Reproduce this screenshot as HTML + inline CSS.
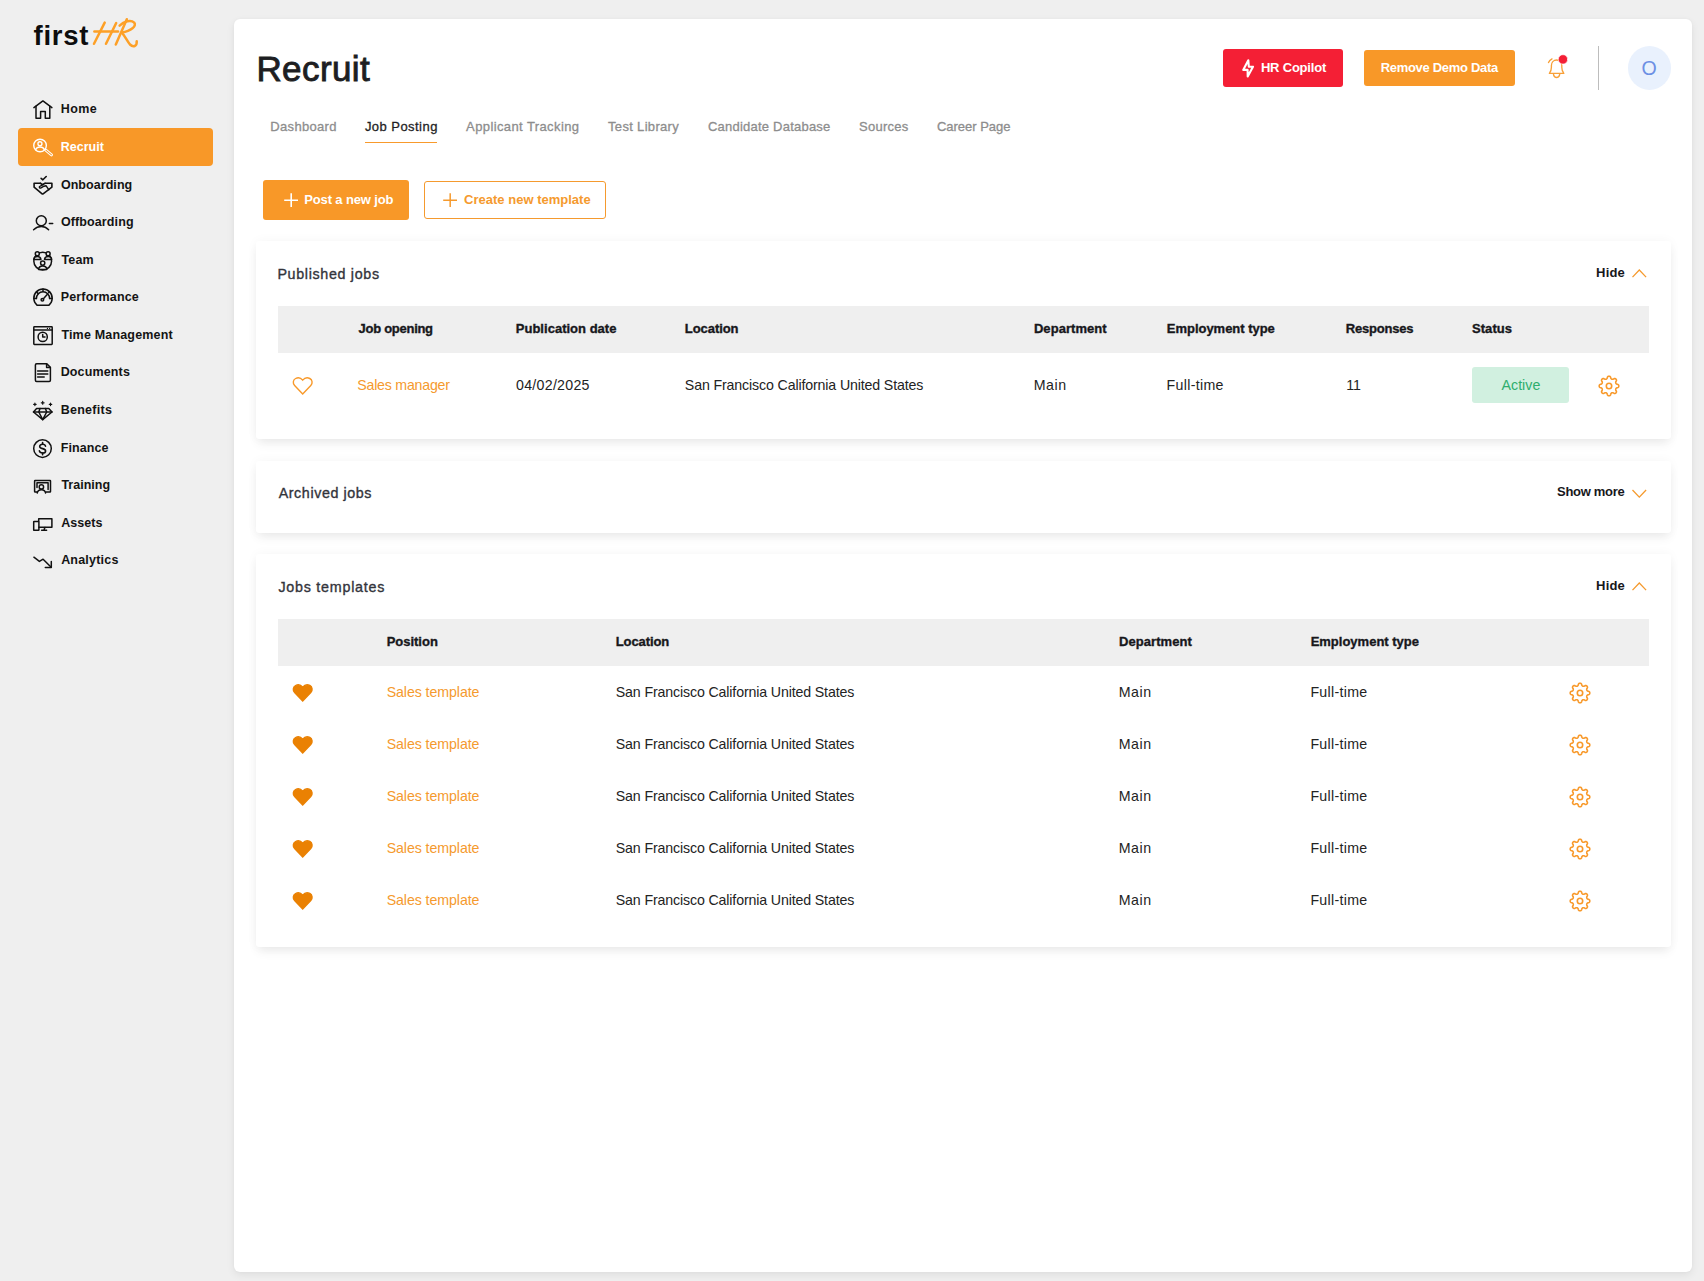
<!DOCTYPE html>
<html lang="en">
<head>
<meta charset="utf-8">
<title>Recruit - Job Posting</title>
<style>
*{box-sizing:border-box;margin:0;padding:0}
html,body{width:1704px;height:1281px;overflow:hidden}
body{background:#efefef;font-family:"Liberation Sans",sans-serif;color:#1b1b1f;position:relative;font-size:13px}
.abs{position:absolute}
.t{position:absolute;white-space:nowrap;line-height:20px}
.ic{fill:none;stroke-width:1.5;stroke-linecap:round;stroke-linejoin:round;overflow:visible}
#main{position:absolute;left:234px;top:19px;width:1458px;height:1253px;background:#fff;border-radius:6px;box-shadow:0 3px 8px rgba(0,0,0,.07),0 0 3px rgba(0,0,0,.03)}
.card{position:absolute;left:256px;width:1415px;background:#fff;border-radius:3px;box-shadow:0 6px 11px -2px rgba(0,0,0,.075),0 0 12px rgba(0,0,0,.04)}
.thead{position:absolute;left:278px;width:1371px;height:47px;background:#efefef}
</style>
</head>
<body>
<!-- LOGO -->
<svg class="abs" style="left:0;top:0" width="160" height="60" viewBox="0 0 160 60" fill="none" stroke="#fda027" stroke-width="2.5" stroke-linecap="round" stroke-linejoin="round"><path d="M104.7 22.6 L94 43.8"/><path d="M116.2 23 L106 43.8"/><path d="M94.4 31.6 H118"/><path d="M126.8 19.2 L115.8 44.5"/><path d="M119.6 25.6 C124 21.2 131 19.6 134.2 22.6 C137 26 131 31 121.8 32.6 C125 36 127 41 130 44.5 C133 47.5 137.2 46.5 136.7 41.2"/></svg>
<!-- SIDEBAR -->
<div class="abs" style="left:18px;top:128px;width:195px;height:38px;border-radius:4px;background:#f89828"></div>
<svg class="abs ic" style="left:33px;top:100.3px" width="20" height="20" viewBox="0 0 20 20" stroke="#111"><path d="M0.9 7.6 L9.9 0.9 L18.9 7.6"/><path d="M3 6.3 V18.3 H7.6 V11.6 H12.3 V18.3 H16.8 V6.3"/></svg>
<svg class="abs ic" style="left:33px;top:138.6px" width="20" height="20" viewBox="0 0 20 20" stroke="#fff"><g stroke-width="1.4"><circle cx="7.05" cy="6.5" r="6.3"/><circle cx="6.95" cy="4.8" r="2"/><path d="M2.6 10.6 C3.4 8.8 4.9 8 6.95 8 S10.6 8.8 11.4 10.6"/><rect x="0.1" y="-0.95" width="9.3" height="1.9" rx="0.95" stroke-width="1.05" transform="translate(12 10.5) rotate(39.5)"/></g></svg>
<svg class="abs ic" style="left:33px;top:176px" width="20" height="20" viewBox="0 0 20 20" stroke="#111"><g stroke-width="1.6"><path d="M8.1 2.3 L9.9 3.8 L13.2 0.5"/><path d="M7.4 7.25 H1.1 V11.2 L9.1 17.8 Q9.6 18.2 10.1 17.8 L18.9 11.2 V7.25 H12.2"/><path d="M7.4 7.25 L9.5 8.6 L12.2 7.25"/><path d="M10.4 8.3 L6.6 10.5 C5.8 11.3 6.8 12.6 8 11.9 L11 10.2 L13 9.7 L15.9 13.8" stroke-width="1.4"/></g></svg>
<svg class="abs ic" style="left:33px;top:214.7px" width="20" height="20" viewBox="0 0 20 20" stroke="#111"><circle cx="8.3" cy="5.7" r="5"/><path d="M0.6 14.7 C3 12.4 5.5 11.5 8.3 11.5 S13.4 12.4 15.6 14.7"/><path d="M16.4 8.6 H19.7"/></svg>
<svg class="abs ic" style="left:33px;top:251.1px" width="20" height="20" viewBox="0 0 20 20" stroke="#111"><circle cx="9.7" cy="10.1" r="8.9"/><g fill="#efefef"><path d="M0.7 8.6 C0.9 6.6 2.4 5.6 4.3 5.6 S7.7 6.6 7.9 8.6 Z"/><path d="M11.5 8.6 C11.7 6.6 13.2 5.6 15.1 5.6 S18.5 6.6 18.7 8.6 Z"/><circle cx="4.3" cy="2.8" r="2"/><circle cx="15.1" cy="2.8" r="2"/><path d="M5.6 18.4 C5.8 16 7.5 14.9 9.7 14.9 S13.6 16 13.8 18.4 Z"/><circle cx="9.7" cy="12.1" r="2.1"/></g></svg>
<svg class="abs ic" style="left:33px;top:288px" width="20" height="20" viewBox="0 0 20 20" stroke="#111"><path d="M4.2 17.3 A9.2 9.2 0 1 1 15.8 17.3 Z"/><path d="M3.4 10.4 A6.6 6.6 0 0 1 16.6 10.4"/><path d="M10 1 V3.6 M3.6 4 L5.2 5.6 M16.4 4 L15.6 4.8 M0.9 10.4 H3.4 M16.6 10.4 H19.1"/><circle cx="9.4" cy="11.7" r="1.3"/><path d="M10.4 10.8 L14.2 6.6"/></svg>
<svg class="abs ic" style="left:33px;top:326.4px" width="20" height="20" viewBox="0 0 20 20" stroke="#111"><rect x="0.8" y="0.8" width="18.4" height="17.6" rx="0.6"/><path d="M0.8 4.1 H19.2"/><path d="M14.4 2.4 H14.5 M16.6 2.4 H16.7" stroke-width="1.2"/><circle cx="9.7" cy="10.9" r="4.6"/><path d="M9.7 8.4 V11 H12"/></svg>
<svg class="abs ic" style="left:33px;top:363px" width="20" height="20" viewBox="0 0 20 20" stroke="#111"><path d="M3.6 0.8 H13.8 L17.4 4.4 V17.2 C17.4 18 17 18.4 16.2 18.4 H3.6 C2.8 18.4 2.4 18 2.4 17.2 V2 C2.4 1.2 2.8 0.8 3.6 0.8 Z"/><path d="M13.6 1 V4.6 H17.2"/><path d="M4.6 8.1 H14.8 M4.6 11 H14.8 M4.6 13.9 H11.2"/></svg>
<svg class="abs ic" style="left:33px;top:401.1px" width="20" height="20" viewBox="0 0 20 20" stroke="#111"><path d="M3.6 7.4 H15.8 L19 11 L9.7 18.6 L0.5 11 Z"/><path d="M0.5 11 H19"/><path d="M7 7.4 L5.8 11 L9.7 18.6 L13.7 11 L12.4 7.4"/><path d="M1.9 2.2 V4.6 M0.7 3.4 H3.1 M9.7 0.4 V3.2 M8.3 1.8 H11.1 M17.5 2.2 V4.6 M16.3 3.4 H18.7" stroke-width="1.2"/></svg>
<svg class="abs ic" style="left:33px;top:439px" width="20" height="20" viewBox="0 0 20 20" stroke="#111"><circle cx="9.5" cy="9.6" r="8.8"/><path d="M12.5 7.2 C12.2 5.8 11 5.3 9.6 5.3 C7.9 5.3 6.7 6.1 6.7 7.4 C6.7 8.8 7.9 9.2 9.6 9.6 C11.3 10 12.6 10.5 12.6 11.9 C12.6 13.2 11.3 14 9.6 14 C8 14 6.7 13.4 6.4 11.9" stroke-width="1.6"/><path d="M9.6 3.6 V5.2 M9.6 14 V15.7" stroke-width="1.6"/></svg>
<svg class="abs ic" style="left:33px;top:478.6px" width="20" height="20" viewBox="0 0 20 20" stroke="#111"><path d="M4.4 13 H2.1 C1.8 13 1.6 12.8 1.6 12.5 V1.9 C1.6 1.6 1.8 1.4 2.1 1.4 H17 C17.3 1.4 17.5 1.6 17.5 1.9 V12.5 C17.5 12.8 17.3 13 17 13 H13.2"/><path d="M4 8.4 V3.8 H15.1 V10.6"/><circle cx="8.4" cy="7.9" r="2.2"/><path d="M4.2 14 C4.6 11.7 6.2 10.7 8.4 10.7 S12.2 11.7 12.6 14"/></svg>
<svg class="abs ic" style="left:33px;top:517.9px" width="20" height="20" viewBox="0 0 20 20" stroke="#111"><path d="M5.7 3 V0.7 H18.9 V9.3 H5.9"/><path d="M11.9 9.5 L10.9 12.2 M8.6 12.3 H13.6"/><rect x="0.7" y="3.4" width="5.2" height="8.9" rx="0.4"/></svg>
<svg class="abs ic" style="left:33px;top:555.6px" width="20" height="20" viewBox="0 0 20 20" stroke="#111"><path d="M0.9 1.2 L6.4 5.4 L10.1 3.2 L18.2 11.2"/><path d="M18.3 5.4 V11.4 H12.3"/></svg>
<!-- MAIN PANEL -->
<div id="main"></div>
<!-- HEADER RIGHT -->
<div class="abs" style="left:1223px;top:49px;width:120px;height:38px;background:#f41f35;border-radius:3px"></div>
<svg class="abs" style="left:1235px;top:52px" width="30" height="32" viewBox="0 0 30 32" fill="none" stroke="#fff" stroke-width="2.1" stroke-linejoin="round"><path d="M13.3 8.2 L8.2 17.9 H12.6 L12.7 24.4 L18 14.7 H13.8 Z"/></svg>
<div class="abs" style="left:1364px;top:50px;width:151px;height:36px;background:#f89828;border-radius:3px"></div>
<svg class="abs" style="left:1535px;top:40px" width="40" height="44" viewBox="0 0 40 44" fill="none" stroke="#f8a038" stroke-width="1.35" stroke-linecap="round" stroke-linejoin="round"><path d="M14.4 33.4 C15.8 31.6 16.4 29.6 16.4 27.2 V25.6 C16.4 22.4 18.6 20 21.6 20 C24.6 20 26.8 22.4 26.8 25.6 V27.2 C26.8 29.6 27.4 31.6 28.8 33.4 Z"/><path d="M18.5 34.3 C18.9 36.5 20 37.5 21.6 37.5 S24.3 36.5 24.7 34.3"/><path d="M13.5 22.6 C14.1 21 15.3 19.7 17 18.9"/><circle cx="28" cy="19.4" r="4.7" fill="#f41f35" stroke="#fff" stroke-width="0.6"/></svg>
<div class="abs" style="left:1598px;top:46px;width:1px;height:44px;background:#bdbdbd"></div>
<div class="abs" style="left:1628px;top:46px;width:43px;height:43.6px;border-radius:50%;background:#e9f1fd"></div>
<!-- TABS -->
<div class="abs" style="left:365px;top:142px;width:72px;height:1px;background:#f89a2c"></div>
<!-- ACTION BUTTONS -->
<div class="abs" style="left:263px;top:180px;width:146px;height:40px;background:#f89828;border-radius:3px"></div>
<svg class="abs" style="left:283.5px;top:192.7px" width="14.4" height="14.4" viewBox="0 0 14.4 14.4" stroke="#fff" stroke-width="1.6" fill="none"><path d="M7.2 0.2 V14.2 M0.2 7.2 H14.2"/></svg>
<div class="abs" style="left:424px;top:181px;width:182px;height:38px;background:#fff;border:1px solid #f59a2e;border-radius:3px"></div>
<svg class="abs" style="left:442.6px;top:192.7px" width="14.4" height="14.4" viewBox="0 0 14.4 14.4" stroke="#f59a2e" stroke-width="1.5" fill="none"><path d="M7.2 0.2 V14.2 M0.2 7.2 H14.2"/></svg>
<!-- PUBLISHED JOBS -->
<div class="card" style="top:241px;height:198px"></div>
<svg class="abs" style="left:1631.50px;top:268.60px" width="15" height="9" viewBox="0 0 15 9" fill="none" stroke="#f59a2e" stroke-width="1.3"><path d="M0.5 8.1 L7.3 1 L14.1 8.1"/></svg>
<div class="thead" style="top:306px"></div>
<svg class="abs" style="left:283px;top:368.00px" width="40" height="35" viewBox="0 0 40 35" fill="none" stroke="#f8992a" stroke-width="1.4" stroke-linejoin="miter"><path d="M19.7 26 L11.6 17.6 C9.6 15.5 9.9 11.9 12.6 10.5 C15 9.3 17.9 10 19.7 12.1 C21.5 10 24.4 9.3 26.8 10.5 C29.5 11.9 29.8 15.5 27.8 17.6 Z"/></svg>
<div class="abs" style="left:1472.2px;top:367.3px;width:96.5px;height:35.4px;background:#d1f0e0;border-radius:3px"></div>
<svg class="abs" style="left:1596.50px;top:373.60px" width="24" height="24" viewBox="-12 -12 24 24" fill="none" stroke="#f8992a" stroke-width="1.6" stroke-linejoin="round"><path d="M9.80 0.00 L9.77 0.32 L9.69 0.63 L9.55 0.94 L9.34 1.23 L9.05 1.49 L8.43 1.68 L7.82 1.82 L7.52 2.01 L7.28 2.21 L7.09 2.41 L6.95 2.61 L6.84 2.83 L6.76 3.06 L6.72 3.31 L6.71 3.59 L6.74 3.89 L6.82 4.24 L7.15 4.78 L7.45 5.34 L7.47 5.73 L7.41 6.08 L7.30 6.40 L7.14 6.68 L6.93 6.93 L6.68 7.14 L6.40 7.30 L6.08 7.41 L5.73 7.47 L5.34 7.45 L4.78 7.15 L4.24 6.82 L3.89 6.74 L3.59 6.71 L3.31 6.72 L3.06 6.76 L2.83 6.84 L2.61 6.95 L2.41 7.09 L2.21 7.28 L2.01 7.52 L1.82 7.82 L1.68 8.43 L1.49 9.05 L1.23 9.34 L0.94 9.55 L0.63 9.69 L0.32 9.77 L0.00 9.80 L-0.32 9.77 L-0.63 9.69 L-0.94 9.55 L-1.23 9.34 L-1.49 9.05 L-1.68 8.43 L-1.82 7.82 L-2.01 7.52 L-2.21 7.28 L-2.41 7.09 L-2.61 6.95 L-2.83 6.84 L-3.06 6.76 L-3.31 6.72 L-3.59 6.71 L-3.89 6.74 L-4.24 6.82 L-4.78 7.15 L-5.34 7.45 L-5.73 7.47 L-6.08 7.41 L-6.40 7.30 L-6.68 7.14 L-6.93 6.93 L-7.14 6.68 L-7.30 6.40 L-7.41 6.08 L-7.47 5.73 L-7.45 5.34 L-7.15 4.78 L-6.82 4.24 L-6.74 3.89 L-6.71 3.59 L-6.72 3.31 L-6.76 3.06 L-6.84 2.83 L-6.95 2.61 L-7.09 2.41 L-7.28 2.21 L-7.52 2.01 L-7.82 1.82 L-8.43 1.68 L-9.05 1.49 L-9.34 1.23 L-9.55 0.94 L-9.69 0.63 L-9.77 0.32 L-9.80 0.00 L-9.77 -0.32 L-9.69 -0.63 L-9.55 -0.94 L-9.34 -1.23 L-9.05 -1.49 L-8.43 -1.68 L-7.82 -1.82 L-7.52 -2.01 L-7.28 -2.21 L-7.09 -2.41 L-6.95 -2.61 L-6.84 -2.83 L-6.76 -3.06 L-6.72 -3.31 L-6.71 -3.59 L-6.74 -3.89 L-6.82 -4.24 L-7.15 -4.78 L-7.45 -5.34 L-7.47 -5.73 L-7.41 -6.08 L-7.30 -6.40 L-7.14 -6.68 L-6.93 -6.93 L-6.68 -7.14 L-6.40 -7.30 L-6.08 -7.41 L-5.73 -7.47 L-5.34 -7.45 L-4.78 -7.15 L-4.24 -6.82 L-3.89 -6.74 L-3.59 -6.71 L-3.31 -6.72 L-3.06 -6.76 L-2.83 -6.84 L-2.61 -6.95 L-2.41 -7.09 L-2.21 -7.28 L-2.01 -7.52 L-1.82 -7.82 L-1.68 -8.43 L-1.49 -9.05 L-1.23 -9.34 L-0.94 -9.55 L-0.63 -9.69 L-0.32 -9.77 L-0.00 -9.80 L0.32 -9.77 L0.63 -9.69 L0.94 -9.55 L1.23 -9.34 L1.49 -9.05 L1.68 -8.43 L1.82 -7.82 L2.01 -7.52 L2.21 -7.28 L2.41 -7.09 L2.61 -6.95 L2.83 -6.84 L3.06 -6.76 L3.31 -6.72 L3.59 -6.71 L3.89 -6.74 L4.24 -6.82 L4.78 -7.15 L5.34 -7.45 L5.73 -7.47 L6.08 -7.41 L6.40 -7.30 L6.68 -7.14 L6.93 -6.93 L7.14 -6.68 L7.30 -6.40 L7.41 -6.08 L7.47 -5.73 L7.45 -5.34 L7.15 -4.78 L6.82 -4.24 L6.74 -3.89 L6.71 -3.59 L6.72 -3.31 L6.76 -3.06 L6.84 -2.83 L6.95 -2.61 L7.09 -2.41 L7.28 -2.21 L7.52 -2.01 L7.82 -1.82 L8.43 -1.68 L9.05 -1.49 L9.34 -1.23 L9.55 -0.94 L9.69 -0.63 L9.77 -0.32 Z"/><circle cx="0" cy="0" r="2.7"/></svg>
<!-- ARCHIVED JOBS -->
<div class="card" style="top:461px;height:72px"></div>
<svg class="abs" style="left:1631.50px;top:488.90px" width="15" height="9" viewBox="0 0 15 9" fill="none" stroke="#f59a2e" stroke-width="1.3"><path d="M0.5 1 L7.3 8.1 L14.1 1"/></svg>
<!-- JOBS TEMPLATES -->
<div class="card" style="top:554px;height:393px"></div>
<svg class="abs" style="left:1631.50px;top:581.80px" width="15" height="9" viewBox="0 0 15 9" fill="none" stroke="#f59a2e" stroke-width="1.3"><path d="M0.5 8.1 L7.3 1 L14.1 8.1"/></svg>
<div class="thead" style="top:619px"></div>
<svg class="abs" style="left:283px;top:675.00px" width="40" height="35" viewBox="0 0 40 35" fill="#ea8103" stroke="#ea8103" stroke-width="1.4" stroke-linejoin="miter"><path d="M19.7 26 L11.6 17.6 C9.6 15.5 9.9 11.9 12.6 10.5 C15 9.3 17.9 10 19.7 12.1 C21.5 10 24.4 9.3 26.8 10.5 C29.5 11.9 29.8 15.5 27.8 17.6 Z"/></svg>
<svg class="abs" style="left:1567.50px;top:680.60px" width="24" height="24" viewBox="-12 -12 24 24" fill="none" stroke="#f8992a" stroke-width="1.6" stroke-linejoin="round"><path d="M9.80 0.00 L9.77 0.32 L9.69 0.63 L9.55 0.94 L9.34 1.23 L9.05 1.49 L8.43 1.68 L7.82 1.82 L7.52 2.01 L7.28 2.21 L7.09 2.41 L6.95 2.61 L6.84 2.83 L6.76 3.06 L6.72 3.31 L6.71 3.59 L6.74 3.89 L6.82 4.24 L7.15 4.78 L7.45 5.34 L7.47 5.73 L7.41 6.08 L7.30 6.40 L7.14 6.68 L6.93 6.93 L6.68 7.14 L6.40 7.30 L6.08 7.41 L5.73 7.47 L5.34 7.45 L4.78 7.15 L4.24 6.82 L3.89 6.74 L3.59 6.71 L3.31 6.72 L3.06 6.76 L2.83 6.84 L2.61 6.95 L2.41 7.09 L2.21 7.28 L2.01 7.52 L1.82 7.82 L1.68 8.43 L1.49 9.05 L1.23 9.34 L0.94 9.55 L0.63 9.69 L0.32 9.77 L0.00 9.80 L-0.32 9.77 L-0.63 9.69 L-0.94 9.55 L-1.23 9.34 L-1.49 9.05 L-1.68 8.43 L-1.82 7.82 L-2.01 7.52 L-2.21 7.28 L-2.41 7.09 L-2.61 6.95 L-2.83 6.84 L-3.06 6.76 L-3.31 6.72 L-3.59 6.71 L-3.89 6.74 L-4.24 6.82 L-4.78 7.15 L-5.34 7.45 L-5.73 7.47 L-6.08 7.41 L-6.40 7.30 L-6.68 7.14 L-6.93 6.93 L-7.14 6.68 L-7.30 6.40 L-7.41 6.08 L-7.47 5.73 L-7.45 5.34 L-7.15 4.78 L-6.82 4.24 L-6.74 3.89 L-6.71 3.59 L-6.72 3.31 L-6.76 3.06 L-6.84 2.83 L-6.95 2.61 L-7.09 2.41 L-7.28 2.21 L-7.52 2.01 L-7.82 1.82 L-8.43 1.68 L-9.05 1.49 L-9.34 1.23 L-9.55 0.94 L-9.69 0.63 L-9.77 0.32 L-9.80 0.00 L-9.77 -0.32 L-9.69 -0.63 L-9.55 -0.94 L-9.34 -1.23 L-9.05 -1.49 L-8.43 -1.68 L-7.82 -1.82 L-7.52 -2.01 L-7.28 -2.21 L-7.09 -2.41 L-6.95 -2.61 L-6.84 -2.83 L-6.76 -3.06 L-6.72 -3.31 L-6.71 -3.59 L-6.74 -3.89 L-6.82 -4.24 L-7.15 -4.78 L-7.45 -5.34 L-7.47 -5.73 L-7.41 -6.08 L-7.30 -6.40 L-7.14 -6.68 L-6.93 -6.93 L-6.68 -7.14 L-6.40 -7.30 L-6.08 -7.41 L-5.73 -7.47 L-5.34 -7.45 L-4.78 -7.15 L-4.24 -6.82 L-3.89 -6.74 L-3.59 -6.71 L-3.31 -6.72 L-3.06 -6.76 L-2.83 -6.84 L-2.61 -6.95 L-2.41 -7.09 L-2.21 -7.28 L-2.01 -7.52 L-1.82 -7.82 L-1.68 -8.43 L-1.49 -9.05 L-1.23 -9.34 L-0.94 -9.55 L-0.63 -9.69 L-0.32 -9.77 L-0.00 -9.80 L0.32 -9.77 L0.63 -9.69 L0.94 -9.55 L1.23 -9.34 L1.49 -9.05 L1.68 -8.43 L1.82 -7.82 L2.01 -7.52 L2.21 -7.28 L2.41 -7.09 L2.61 -6.95 L2.83 -6.84 L3.06 -6.76 L3.31 -6.72 L3.59 -6.71 L3.89 -6.74 L4.24 -6.82 L4.78 -7.15 L5.34 -7.45 L5.73 -7.47 L6.08 -7.41 L6.40 -7.30 L6.68 -7.14 L6.93 -6.93 L7.14 -6.68 L7.30 -6.40 L7.41 -6.08 L7.47 -5.73 L7.45 -5.34 L7.15 -4.78 L6.82 -4.24 L6.74 -3.89 L6.71 -3.59 L6.72 -3.31 L6.76 -3.06 L6.84 -2.83 L6.95 -2.61 L7.09 -2.41 L7.28 -2.21 L7.52 -2.01 L7.82 -1.82 L8.43 -1.68 L9.05 -1.49 L9.34 -1.23 L9.55 -0.94 L9.69 -0.63 L9.77 -0.32 Z"/><circle cx="0" cy="0" r="2.7"/></svg>
<svg class="abs" style="left:283px;top:727.00px" width="40" height="35" viewBox="0 0 40 35" fill="#ea8103" stroke="#ea8103" stroke-width="1.4" stroke-linejoin="miter"><path d="M19.7 26 L11.6 17.6 C9.6 15.5 9.9 11.9 12.6 10.5 C15 9.3 17.9 10 19.7 12.1 C21.5 10 24.4 9.3 26.8 10.5 C29.5 11.9 29.8 15.5 27.8 17.6 Z"/></svg>
<svg class="abs" style="left:1567.50px;top:732.60px" width="24" height="24" viewBox="-12 -12 24 24" fill="none" stroke="#f8992a" stroke-width="1.6" stroke-linejoin="round"><path d="M9.80 0.00 L9.77 0.32 L9.69 0.63 L9.55 0.94 L9.34 1.23 L9.05 1.49 L8.43 1.68 L7.82 1.82 L7.52 2.01 L7.28 2.21 L7.09 2.41 L6.95 2.61 L6.84 2.83 L6.76 3.06 L6.72 3.31 L6.71 3.59 L6.74 3.89 L6.82 4.24 L7.15 4.78 L7.45 5.34 L7.47 5.73 L7.41 6.08 L7.30 6.40 L7.14 6.68 L6.93 6.93 L6.68 7.14 L6.40 7.30 L6.08 7.41 L5.73 7.47 L5.34 7.45 L4.78 7.15 L4.24 6.82 L3.89 6.74 L3.59 6.71 L3.31 6.72 L3.06 6.76 L2.83 6.84 L2.61 6.95 L2.41 7.09 L2.21 7.28 L2.01 7.52 L1.82 7.82 L1.68 8.43 L1.49 9.05 L1.23 9.34 L0.94 9.55 L0.63 9.69 L0.32 9.77 L0.00 9.80 L-0.32 9.77 L-0.63 9.69 L-0.94 9.55 L-1.23 9.34 L-1.49 9.05 L-1.68 8.43 L-1.82 7.82 L-2.01 7.52 L-2.21 7.28 L-2.41 7.09 L-2.61 6.95 L-2.83 6.84 L-3.06 6.76 L-3.31 6.72 L-3.59 6.71 L-3.89 6.74 L-4.24 6.82 L-4.78 7.15 L-5.34 7.45 L-5.73 7.47 L-6.08 7.41 L-6.40 7.30 L-6.68 7.14 L-6.93 6.93 L-7.14 6.68 L-7.30 6.40 L-7.41 6.08 L-7.47 5.73 L-7.45 5.34 L-7.15 4.78 L-6.82 4.24 L-6.74 3.89 L-6.71 3.59 L-6.72 3.31 L-6.76 3.06 L-6.84 2.83 L-6.95 2.61 L-7.09 2.41 L-7.28 2.21 L-7.52 2.01 L-7.82 1.82 L-8.43 1.68 L-9.05 1.49 L-9.34 1.23 L-9.55 0.94 L-9.69 0.63 L-9.77 0.32 L-9.80 0.00 L-9.77 -0.32 L-9.69 -0.63 L-9.55 -0.94 L-9.34 -1.23 L-9.05 -1.49 L-8.43 -1.68 L-7.82 -1.82 L-7.52 -2.01 L-7.28 -2.21 L-7.09 -2.41 L-6.95 -2.61 L-6.84 -2.83 L-6.76 -3.06 L-6.72 -3.31 L-6.71 -3.59 L-6.74 -3.89 L-6.82 -4.24 L-7.15 -4.78 L-7.45 -5.34 L-7.47 -5.73 L-7.41 -6.08 L-7.30 -6.40 L-7.14 -6.68 L-6.93 -6.93 L-6.68 -7.14 L-6.40 -7.30 L-6.08 -7.41 L-5.73 -7.47 L-5.34 -7.45 L-4.78 -7.15 L-4.24 -6.82 L-3.89 -6.74 L-3.59 -6.71 L-3.31 -6.72 L-3.06 -6.76 L-2.83 -6.84 L-2.61 -6.95 L-2.41 -7.09 L-2.21 -7.28 L-2.01 -7.52 L-1.82 -7.82 L-1.68 -8.43 L-1.49 -9.05 L-1.23 -9.34 L-0.94 -9.55 L-0.63 -9.69 L-0.32 -9.77 L-0.00 -9.80 L0.32 -9.77 L0.63 -9.69 L0.94 -9.55 L1.23 -9.34 L1.49 -9.05 L1.68 -8.43 L1.82 -7.82 L2.01 -7.52 L2.21 -7.28 L2.41 -7.09 L2.61 -6.95 L2.83 -6.84 L3.06 -6.76 L3.31 -6.72 L3.59 -6.71 L3.89 -6.74 L4.24 -6.82 L4.78 -7.15 L5.34 -7.45 L5.73 -7.47 L6.08 -7.41 L6.40 -7.30 L6.68 -7.14 L6.93 -6.93 L7.14 -6.68 L7.30 -6.40 L7.41 -6.08 L7.47 -5.73 L7.45 -5.34 L7.15 -4.78 L6.82 -4.24 L6.74 -3.89 L6.71 -3.59 L6.72 -3.31 L6.76 -3.06 L6.84 -2.83 L6.95 -2.61 L7.09 -2.41 L7.28 -2.21 L7.52 -2.01 L7.82 -1.82 L8.43 -1.68 L9.05 -1.49 L9.34 -1.23 L9.55 -0.94 L9.69 -0.63 L9.77 -0.32 Z"/><circle cx="0" cy="0" r="2.7"/></svg>
<svg class="abs" style="left:283px;top:779.00px" width="40" height="35" viewBox="0 0 40 35" fill="#ea8103" stroke="#ea8103" stroke-width="1.4" stroke-linejoin="miter"><path d="M19.7 26 L11.6 17.6 C9.6 15.5 9.9 11.9 12.6 10.5 C15 9.3 17.9 10 19.7 12.1 C21.5 10 24.4 9.3 26.8 10.5 C29.5 11.9 29.8 15.5 27.8 17.6 Z"/></svg>
<svg class="abs" style="left:1567.50px;top:784.60px" width="24" height="24" viewBox="-12 -12 24 24" fill="none" stroke="#f8992a" stroke-width="1.6" stroke-linejoin="round"><path d="M9.80 0.00 L9.77 0.32 L9.69 0.63 L9.55 0.94 L9.34 1.23 L9.05 1.49 L8.43 1.68 L7.82 1.82 L7.52 2.01 L7.28 2.21 L7.09 2.41 L6.95 2.61 L6.84 2.83 L6.76 3.06 L6.72 3.31 L6.71 3.59 L6.74 3.89 L6.82 4.24 L7.15 4.78 L7.45 5.34 L7.47 5.73 L7.41 6.08 L7.30 6.40 L7.14 6.68 L6.93 6.93 L6.68 7.14 L6.40 7.30 L6.08 7.41 L5.73 7.47 L5.34 7.45 L4.78 7.15 L4.24 6.82 L3.89 6.74 L3.59 6.71 L3.31 6.72 L3.06 6.76 L2.83 6.84 L2.61 6.95 L2.41 7.09 L2.21 7.28 L2.01 7.52 L1.82 7.82 L1.68 8.43 L1.49 9.05 L1.23 9.34 L0.94 9.55 L0.63 9.69 L0.32 9.77 L0.00 9.80 L-0.32 9.77 L-0.63 9.69 L-0.94 9.55 L-1.23 9.34 L-1.49 9.05 L-1.68 8.43 L-1.82 7.82 L-2.01 7.52 L-2.21 7.28 L-2.41 7.09 L-2.61 6.95 L-2.83 6.84 L-3.06 6.76 L-3.31 6.72 L-3.59 6.71 L-3.89 6.74 L-4.24 6.82 L-4.78 7.15 L-5.34 7.45 L-5.73 7.47 L-6.08 7.41 L-6.40 7.30 L-6.68 7.14 L-6.93 6.93 L-7.14 6.68 L-7.30 6.40 L-7.41 6.08 L-7.47 5.73 L-7.45 5.34 L-7.15 4.78 L-6.82 4.24 L-6.74 3.89 L-6.71 3.59 L-6.72 3.31 L-6.76 3.06 L-6.84 2.83 L-6.95 2.61 L-7.09 2.41 L-7.28 2.21 L-7.52 2.01 L-7.82 1.82 L-8.43 1.68 L-9.05 1.49 L-9.34 1.23 L-9.55 0.94 L-9.69 0.63 L-9.77 0.32 L-9.80 0.00 L-9.77 -0.32 L-9.69 -0.63 L-9.55 -0.94 L-9.34 -1.23 L-9.05 -1.49 L-8.43 -1.68 L-7.82 -1.82 L-7.52 -2.01 L-7.28 -2.21 L-7.09 -2.41 L-6.95 -2.61 L-6.84 -2.83 L-6.76 -3.06 L-6.72 -3.31 L-6.71 -3.59 L-6.74 -3.89 L-6.82 -4.24 L-7.15 -4.78 L-7.45 -5.34 L-7.47 -5.73 L-7.41 -6.08 L-7.30 -6.40 L-7.14 -6.68 L-6.93 -6.93 L-6.68 -7.14 L-6.40 -7.30 L-6.08 -7.41 L-5.73 -7.47 L-5.34 -7.45 L-4.78 -7.15 L-4.24 -6.82 L-3.89 -6.74 L-3.59 -6.71 L-3.31 -6.72 L-3.06 -6.76 L-2.83 -6.84 L-2.61 -6.95 L-2.41 -7.09 L-2.21 -7.28 L-2.01 -7.52 L-1.82 -7.82 L-1.68 -8.43 L-1.49 -9.05 L-1.23 -9.34 L-0.94 -9.55 L-0.63 -9.69 L-0.32 -9.77 L-0.00 -9.80 L0.32 -9.77 L0.63 -9.69 L0.94 -9.55 L1.23 -9.34 L1.49 -9.05 L1.68 -8.43 L1.82 -7.82 L2.01 -7.52 L2.21 -7.28 L2.41 -7.09 L2.61 -6.95 L2.83 -6.84 L3.06 -6.76 L3.31 -6.72 L3.59 -6.71 L3.89 -6.74 L4.24 -6.82 L4.78 -7.15 L5.34 -7.45 L5.73 -7.47 L6.08 -7.41 L6.40 -7.30 L6.68 -7.14 L6.93 -6.93 L7.14 -6.68 L7.30 -6.40 L7.41 -6.08 L7.47 -5.73 L7.45 -5.34 L7.15 -4.78 L6.82 -4.24 L6.74 -3.89 L6.71 -3.59 L6.72 -3.31 L6.76 -3.06 L6.84 -2.83 L6.95 -2.61 L7.09 -2.41 L7.28 -2.21 L7.52 -2.01 L7.82 -1.82 L8.43 -1.68 L9.05 -1.49 L9.34 -1.23 L9.55 -0.94 L9.69 -0.63 L9.77 -0.32 Z"/><circle cx="0" cy="0" r="2.7"/></svg>
<svg class="abs" style="left:283px;top:831.00px" width="40" height="35" viewBox="0 0 40 35" fill="#ea8103" stroke="#ea8103" stroke-width="1.4" stroke-linejoin="miter"><path d="M19.7 26 L11.6 17.6 C9.6 15.5 9.9 11.9 12.6 10.5 C15 9.3 17.9 10 19.7 12.1 C21.5 10 24.4 9.3 26.8 10.5 C29.5 11.9 29.8 15.5 27.8 17.6 Z"/></svg>
<svg class="abs" style="left:1567.50px;top:836.60px" width="24" height="24" viewBox="-12 -12 24 24" fill="none" stroke="#f8992a" stroke-width="1.6" stroke-linejoin="round"><path d="M9.80 0.00 L9.77 0.32 L9.69 0.63 L9.55 0.94 L9.34 1.23 L9.05 1.49 L8.43 1.68 L7.82 1.82 L7.52 2.01 L7.28 2.21 L7.09 2.41 L6.95 2.61 L6.84 2.83 L6.76 3.06 L6.72 3.31 L6.71 3.59 L6.74 3.89 L6.82 4.24 L7.15 4.78 L7.45 5.34 L7.47 5.73 L7.41 6.08 L7.30 6.40 L7.14 6.68 L6.93 6.93 L6.68 7.14 L6.40 7.30 L6.08 7.41 L5.73 7.47 L5.34 7.45 L4.78 7.15 L4.24 6.82 L3.89 6.74 L3.59 6.71 L3.31 6.72 L3.06 6.76 L2.83 6.84 L2.61 6.95 L2.41 7.09 L2.21 7.28 L2.01 7.52 L1.82 7.82 L1.68 8.43 L1.49 9.05 L1.23 9.34 L0.94 9.55 L0.63 9.69 L0.32 9.77 L0.00 9.80 L-0.32 9.77 L-0.63 9.69 L-0.94 9.55 L-1.23 9.34 L-1.49 9.05 L-1.68 8.43 L-1.82 7.82 L-2.01 7.52 L-2.21 7.28 L-2.41 7.09 L-2.61 6.95 L-2.83 6.84 L-3.06 6.76 L-3.31 6.72 L-3.59 6.71 L-3.89 6.74 L-4.24 6.82 L-4.78 7.15 L-5.34 7.45 L-5.73 7.47 L-6.08 7.41 L-6.40 7.30 L-6.68 7.14 L-6.93 6.93 L-7.14 6.68 L-7.30 6.40 L-7.41 6.08 L-7.47 5.73 L-7.45 5.34 L-7.15 4.78 L-6.82 4.24 L-6.74 3.89 L-6.71 3.59 L-6.72 3.31 L-6.76 3.06 L-6.84 2.83 L-6.95 2.61 L-7.09 2.41 L-7.28 2.21 L-7.52 2.01 L-7.82 1.82 L-8.43 1.68 L-9.05 1.49 L-9.34 1.23 L-9.55 0.94 L-9.69 0.63 L-9.77 0.32 L-9.80 0.00 L-9.77 -0.32 L-9.69 -0.63 L-9.55 -0.94 L-9.34 -1.23 L-9.05 -1.49 L-8.43 -1.68 L-7.82 -1.82 L-7.52 -2.01 L-7.28 -2.21 L-7.09 -2.41 L-6.95 -2.61 L-6.84 -2.83 L-6.76 -3.06 L-6.72 -3.31 L-6.71 -3.59 L-6.74 -3.89 L-6.82 -4.24 L-7.15 -4.78 L-7.45 -5.34 L-7.47 -5.73 L-7.41 -6.08 L-7.30 -6.40 L-7.14 -6.68 L-6.93 -6.93 L-6.68 -7.14 L-6.40 -7.30 L-6.08 -7.41 L-5.73 -7.47 L-5.34 -7.45 L-4.78 -7.15 L-4.24 -6.82 L-3.89 -6.74 L-3.59 -6.71 L-3.31 -6.72 L-3.06 -6.76 L-2.83 -6.84 L-2.61 -6.95 L-2.41 -7.09 L-2.21 -7.28 L-2.01 -7.52 L-1.82 -7.82 L-1.68 -8.43 L-1.49 -9.05 L-1.23 -9.34 L-0.94 -9.55 L-0.63 -9.69 L-0.32 -9.77 L-0.00 -9.80 L0.32 -9.77 L0.63 -9.69 L0.94 -9.55 L1.23 -9.34 L1.49 -9.05 L1.68 -8.43 L1.82 -7.82 L2.01 -7.52 L2.21 -7.28 L2.41 -7.09 L2.61 -6.95 L2.83 -6.84 L3.06 -6.76 L3.31 -6.72 L3.59 -6.71 L3.89 -6.74 L4.24 -6.82 L4.78 -7.15 L5.34 -7.45 L5.73 -7.47 L6.08 -7.41 L6.40 -7.30 L6.68 -7.14 L6.93 -6.93 L7.14 -6.68 L7.30 -6.40 L7.41 -6.08 L7.47 -5.73 L7.45 -5.34 L7.15 -4.78 L6.82 -4.24 L6.74 -3.89 L6.71 -3.59 L6.72 -3.31 L6.76 -3.06 L6.84 -2.83 L6.95 -2.61 L7.09 -2.41 L7.28 -2.21 L7.52 -2.01 L7.82 -1.82 L8.43 -1.68 L9.05 -1.49 L9.34 -1.23 L9.55 -0.94 L9.69 -0.63 L9.77 -0.32 Z"/><circle cx="0" cy="0" r="2.7"/></svg>
<svg class="abs" style="left:283px;top:883.00px" width="40" height="35" viewBox="0 0 40 35" fill="#ea8103" stroke="#ea8103" stroke-width="1.4" stroke-linejoin="miter"><path d="M19.7 26 L11.6 17.6 C9.6 15.5 9.9 11.9 12.6 10.5 C15 9.3 17.9 10 19.7 12.1 C21.5 10 24.4 9.3 26.8 10.5 C29.5 11.9 29.8 15.5 27.8 17.6 Z"/></svg>
<svg class="abs" style="left:1567.50px;top:888.60px" width="24" height="24" viewBox="-12 -12 24 24" fill="none" stroke="#f8992a" stroke-width="1.6" stroke-linejoin="round"><path d="M9.80 0.00 L9.77 0.32 L9.69 0.63 L9.55 0.94 L9.34 1.23 L9.05 1.49 L8.43 1.68 L7.82 1.82 L7.52 2.01 L7.28 2.21 L7.09 2.41 L6.95 2.61 L6.84 2.83 L6.76 3.06 L6.72 3.31 L6.71 3.59 L6.74 3.89 L6.82 4.24 L7.15 4.78 L7.45 5.34 L7.47 5.73 L7.41 6.08 L7.30 6.40 L7.14 6.68 L6.93 6.93 L6.68 7.14 L6.40 7.30 L6.08 7.41 L5.73 7.47 L5.34 7.45 L4.78 7.15 L4.24 6.82 L3.89 6.74 L3.59 6.71 L3.31 6.72 L3.06 6.76 L2.83 6.84 L2.61 6.95 L2.41 7.09 L2.21 7.28 L2.01 7.52 L1.82 7.82 L1.68 8.43 L1.49 9.05 L1.23 9.34 L0.94 9.55 L0.63 9.69 L0.32 9.77 L0.00 9.80 L-0.32 9.77 L-0.63 9.69 L-0.94 9.55 L-1.23 9.34 L-1.49 9.05 L-1.68 8.43 L-1.82 7.82 L-2.01 7.52 L-2.21 7.28 L-2.41 7.09 L-2.61 6.95 L-2.83 6.84 L-3.06 6.76 L-3.31 6.72 L-3.59 6.71 L-3.89 6.74 L-4.24 6.82 L-4.78 7.15 L-5.34 7.45 L-5.73 7.47 L-6.08 7.41 L-6.40 7.30 L-6.68 7.14 L-6.93 6.93 L-7.14 6.68 L-7.30 6.40 L-7.41 6.08 L-7.47 5.73 L-7.45 5.34 L-7.15 4.78 L-6.82 4.24 L-6.74 3.89 L-6.71 3.59 L-6.72 3.31 L-6.76 3.06 L-6.84 2.83 L-6.95 2.61 L-7.09 2.41 L-7.28 2.21 L-7.52 2.01 L-7.82 1.82 L-8.43 1.68 L-9.05 1.49 L-9.34 1.23 L-9.55 0.94 L-9.69 0.63 L-9.77 0.32 L-9.80 0.00 L-9.77 -0.32 L-9.69 -0.63 L-9.55 -0.94 L-9.34 -1.23 L-9.05 -1.49 L-8.43 -1.68 L-7.82 -1.82 L-7.52 -2.01 L-7.28 -2.21 L-7.09 -2.41 L-6.95 -2.61 L-6.84 -2.83 L-6.76 -3.06 L-6.72 -3.31 L-6.71 -3.59 L-6.74 -3.89 L-6.82 -4.24 L-7.15 -4.78 L-7.45 -5.34 L-7.47 -5.73 L-7.41 -6.08 L-7.30 -6.40 L-7.14 -6.68 L-6.93 -6.93 L-6.68 -7.14 L-6.40 -7.30 L-6.08 -7.41 L-5.73 -7.47 L-5.34 -7.45 L-4.78 -7.15 L-4.24 -6.82 L-3.89 -6.74 L-3.59 -6.71 L-3.31 -6.72 L-3.06 -6.76 L-2.83 -6.84 L-2.61 -6.95 L-2.41 -7.09 L-2.21 -7.28 L-2.01 -7.52 L-1.82 -7.82 L-1.68 -8.43 L-1.49 -9.05 L-1.23 -9.34 L-0.94 -9.55 L-0.63 -9.69 L-0.32 -9.77 L-0.00 -9.80 L0.32 -9.77 L0.63 -9.69 L0.94 -9.55 L1.23 -9.34 L1.49 -9.05 L1.68 -8.43 L1.82 -7.82 L2.01 -7.52 L2.21 -7.28 L2.41 -7.09 L2.61 -6.95 L2.83 -6.84 L3.06 -6.76 L3.31 -6.72 L3.59 -6.71 L3.89 -6.74 L4.24 -6.82 L4.78 -7.15 L5.34 -7.45 L5.73 -7.47 L6.08 -7.41 L6.40 -7.30 L6.68 -7.14 L6.93 -6.93 L7.14 -6.68 L7.30 -6.40 L7.41 -6.08 L7.47 -5.73 L7.45 -5.34 L7.15 -4.78 L6.82 -4.24 L6.74 -3.89 L6.71 -3.59 L6.72 -3.31 L6.76 -3.06 L6.84 -2.83 L6.95 -2.61 L7.09 -2.41 L7.28 -2.21 L7.52 -2.01 L7.82 -1.82 L8.43 -1.68 L9.05 -1.49 L9.34 -1.23 L9.55 -0.94 L9.69 -0.63 L9.77 -0.32 Z"/><circle cx="0" cy="0" r="2.7"/></svg>
<!-- TEXT -->
<div class="t" style="left:33.50px;top:26px;font-size:27.5px;font-weight:700;color:#0d0d0d;letter-spacing:0.738px;">first</div>
<div class="t" style="left:60.65px;top:99px;font-size:12.5px;font-weight:700;color:#141414;letter-spacing:0.467px;">Home</div>
<div class="t" style="left:60.65px;top:137px;font-size:12.5px;font-weight:700;color:#fff;letter-spacing:0.042px;">Recruit</div>
<div class="t" style="left:60.90px;top:175px;font-size:12.5px;font-weight:700;color:#141414;letter-spacing:0.056px;">Onboarding</div>
<div class="t" style="left:60.90px;top:212px;font-size:12.5px;font-weight:700;color:#141414;letter-spacing:0.115px;">Offboarding</div>
<div class="t" style="left:61.40px;top:250px;font-size:12.5px;font-weight:700;color:#141414;letter-spacing:0.2px;">Team</div>
<div class="t" style="left:60.65px;top:287px;font-size:12.5px;font-weight:700;color:#141414;letter-spacing:0.175px;">Performance</div>
<div class="t" style="left:61.40px;top:325px;font-size:12.5px;font-weight:700;color:#141414;letter-spacing:0.175px;">Time Management</div>
<div class="t" style="left:60.65px;top:362px;font-size:12.5px;font-weight:700;color:#141414;letter-spacing:0.144px;">Documents</div>
<div class="t" style="left:60.65px;top:400px;font-size:12.5px;font-weight:700;color:#141414;letter-spacing:0.271px;">Benefits</div>
<div class="t" style="left:60.65px;top:438px;font-size:12.5px;font-weight:700;color:#141414;letter-spacing:0.108px;">Finance</div>
<div class="t" style="left:61.40px;top:475px;font-size:12.5px;font-weight:700;color:#141414;letter-spacing:0.021px;">Training</div>
<div class="t" style="left:61.15px;top:513px;font-size:12.5px;font-weight:700;color:#141414;letter-spacing:0.05px;">Assets</div>
<div class="t" style="left:61.15px;top:550px;font-size:12.5px;font-weight:700;color:#141414;letter-spacing:0.206px;">Analytics</div>
<div class="t" style="left:256.45px;top:59px;font-size:35px;font-weight:400;color:#1d1e22;letter-spacing:0.408px;-webkit-text-stroke:0.9px #1d1e22;">Recruit</div>
<div class="t" style="left:1260.95px;top:58px;font-size:13px;font-weight:700;color:#fff;letter-spacing:-0.206px;">HR Copilot</div>
<div class="t" style="left:1380.65px;top:58px;font-size:13px;font-weight:700;color:#fff;letter-spacing:-0.307px;">Remove Demo Data</div>
<div class="t" style="left:1641.50px;top:58px;font-size:19.6px;font-weight:400;color:#6c8fe4;letter-spacing:0px;">O</div>
<div class="t" style="left:270.30px;top:117px;font-size:13px;font-weight:400;color:#8d8d8d;letter-spacing:0.325px;-webkit-text-stroke:0.3px #8d8d8d;">Dashboard</div>
<div class="t" style="left:364.90px;top:117px;font-size:13px;font-weight:400;color:#1f1f25;letter-spacing:0.455px;-webkit-text-stroke:0.3px #1f1f25;">Job Posting</div>
<div class="t" style="left:466.10px;top:117px;font-size:13px;font-weight:400;color:#8d8d8d;letter-spacing:0.394px;-webkit-text-stroke:0.3px #8d8d8d;">Applicant Tracking</div>
<div class="t" style="left:608.05px;top:117px;font-size:13px;font-weight:400;color:#8d8d8d;letter-spacing:0.318px;-webkit-text-stroke:0.3px #8d8d8d;">Test Library</div>
<div class="t" style="left:707.90px;top:117px;font-size:13px;font-weight:400;color:#8d8d8d;letter-spacing:0.229px;-webkit-text-stroke:0.3px #8d8d8d;">Candidate Database</div>
<div class="t" style="left:859.00px;top:117px;font-size:13px;font-weight:400;color:#8d8d8d;letter-spacing:0.258px;-webkit-text-stroke:0.3px #8d8d8d;">Sources</div>
<div class="t" style="left:937.00px;top:117px;font-size:13px;font-weight:400;color:#8d8d8d;letter-spacing:-0.025px;-webkit-text-stroke:0.3px #8d8d8d;">Career Page</div>
<div class="t" style="left:304.25px;top:190px;font-size:13px;font-weight:700;color:#fff;letter-spacing:-0.135px;">Post a new job</div>
<div class="t" style="left:464.10px;top:190px;font-size:13px;font-weight:700;color:#f59a2e;letter-spacing:0.006px;">Create new template</div>
<div class="t" style="left:277.40px;top:264px;font-size:14.3px;font-weight:400;color:#33343b;letter-spacing:0.665px;-webkit-text-stroke:0.35px #33343b;">Published jobs</div>
<div class="t" style="left:1596.05px;top:263px;font-size:13px;font-weight:700;color:#17171b;letter-spacing:0.2px;">Hide</div>
<div class="t" style="left:358.60px;top:319px;font-size:13px;font-weight:700;color:#17171b;letter-spacing:-0.28px;-webkit-text-stroke:0.35px #17171b;">Job opening</div>
<div class="t" style="left:515.75px;top:319px;font-size:13px;font-weight:700;color:#17171b;letter-spacing:0.02px;-webkit-text-stroke:0.35px #17171b;">Publication date</div>
<div class="t" style="left:684.85px;top:319px;font-size:13px;font-weight:700;color:#17171b;letter-spacing:-0.071px;-webkit-text-stroke:0.35px #17171b;">Location</div>
<div class="t" style="left:1033.95px;top:319px;font-size:13px;font-weight:700;color:#17171b;letter-spacing:0.044px;-webkit-text-stroke:0.35px #17171b;">Department</div>
<div class="t" style="left:1166.85px;top:319px;font-size:13px;font-weight:700;color:#17171b;letter-spacing:-0.029px;-webkit-text-stroke:0.35px #17171b;">Employment type</div>
<div class="t" style="left:1345.85px;top:319px;font-size:13px;font-weight:700;color:#17171b;letter-spacing:-0.206px;-webkit-text-stroke:0.35px #17171b;">Responses</div>
<div class="t" style="left:1471.95px;top:319px;font-size:13px;font-weight:700;color:#17171b;letter-spacing:0.07px;-webkit-text-stroke:0.35px #17171b;">Status</div>
<div class="t" style="left:357.25px;top:375px;font-size:14.2px;font-weight:400;color:#f59a2e;letter-spacing:-0.225px;">Sales manager</div>
<div class="t" style="left:516.00px;top:375px;font-size:14.2px;font-weight:400;color:#232323;letter-spacing:0.278px;">04/02/2025</div>
<div class="t" style="left:684.85px;top:375px;font-size:14.2px;font-weight:400;color:#232323;letter-spacing:-0.138px;">San Francisco California United States</div>
<div class="t" style="left:1033.70px;top:375px;font-size:14.2px;font-weight:400;color:#232323;letter-spacing:0.6px;">Main</div>
<div class="t" style="left:1166.60px;top:375px;font-size:14.2px;font-weight:400;color:#232323;letter-spacing:0.306px;">Full-time</div>
<div class="t" style="left:1346.20px;top:375px;font-size:14.2px;font-weight:400;color:#232323;letter-spacing:-0.1px;">11</div>
<div class="t" style="left:1501.50px;top:375px;font-size:14.2px;font-weight:400;color:#2fae6d;letter-spacing:0.04px;">Active</div>
<div class="t" style="left:278.65px;top:483px;font-size:14.3px;font-weight:400;color:#33343b;letter-spacing:0.587px;-webkit-text-stroke:0.35px #33343b;">Archived jobs</div>
<div class="t" style="left:1557.05px;top:482px;font-size:13px;font-weight:700;color:#17171b;letter-spacing:-0.3px;">Show more</div>
<div class="t" style="left:278.40px;top:577px;font-size:14.3px;font-weight:400;color:#33343b;letter-spacing:0.758px;-webkit-text-stroke:0.35px #33343b;">Jobs templates</div>
<div class="t" style="left:1596.05px;top:576px;font-size:13px;font-weight:700;color:#17171b;letter-spacing:0.2px;">Hide</div>
<div class="t" style="left:386.65px;top:632px;font-size:13px;font-weight:700;color:#17171b;letter-spacing:-0.014px;-webkit-text-stroke:0.35px #17171b;">Position</div>
<div class="t" style="left:615.75px;top:632px;font-size:13px;font-weight:700;color:#17171b;letter-spacing:-0.1px;-webkit-text-stroke:0.35px #17171b;">Location</div>
<div class="t" style="left:1118.95px;top:632px;font-size:13px;font-weight:700;color:#17171b;letter-spacing:0.078px;-webkit-text-stroke:0.35px #17171b;">Department</div>
<div class="t" style="left:1310.65px;top:632px;font-size:13px;font-weight:700;color:#17171b;letter-spacing:0.0px;-webkit-text-stroke:0.35px #17171b;">Employment type</div>
<div class="t" style="left:386.65px;top:682px;font-size:14.2px;font-weight:400;color:#f59a2e;letter-spacing:-0.077px;">Sales template</div>
<div class="t" style="left:615.75px;top:682px;font-size:14.2px;font-weight:400;color:#232323;letter-spacing:-0.138px;">San Francisco California United States</div>
<div class="t" style="left:1118.70px;top:682px;font-size:14.2px;font-weight:400;color:#232323;letter-spacing:0.6px;">Main</div>
<div class="t" style="left:1310.40px;top:682px;font-size:14.2px;font-weight:400;color:#232323;letter-spacing:0.306px;">Full-time</div>
<div class="t" style="left:386.65px;top:734px;font-size:14.2px;font-weight:400;color:#f59a2e;letter-spacing:-0.077px;">Sales template</div>
<div class="t" style="left:615.75px;top:734px;font-size:14.2px;font-weight:400;color:#232323;letter-spacing:-0.138px;">San Francisco California United States</div>
<div class="t" style="left:1118.70px;top:734px;font-size:14.2px;font-weight:400;color:#232323;letter-spacing:0.6px;">Main</div>
<div class="t" style="left:1310.40px;top:734px;font-size:14.2px;font-weight:400;color:#232323;letter-spacing:0.306px;">Full-time</div>
<div class="t" style="left:386.65px;top:786px;font-size:14.2px;font-weight:400;color:#f59a2e;letter-spacing:-0.077px;">Sales template</div>
<div class="t" style="left:615.75px;top:786px;font-size:14.2px;font-weight:400;color:#232323;letter-spacing:-0.138px;">San Francisco California United States</div>
<div class="t" style="left:1118.70px;top:786px;font-size:14.2px;font-weight:400;color:#232323;letter-spacing:0.6px;">Main</div>
<div class="t" style="left:1310.40px;top:786px;font-size:14.2px;font-weight:400;color:#232323;letter-spacing:0.306px;">Full-time</div>
<div class="t" style="left:386.65px;top:838px;font-size:14.2px;font-weight:400;color:#f59a2e;letter-spacing:-0.077px;">Sales template</div>
<div class="t" style="left:615.75px;top:838px;font-size:14.2px;font-weight:400;color:#232323;letter-spacing:-0.138px;">San Francisco California United States</div>
<div class="t" style="left:1118.70px;top:838px;font-size:14.2px;font-weight:400;color:#232323;letter-spacing:0.6px;">Main</div>
<div class="t" style="left:1310.40px;top:838px;font-size:14.2px;font-weight:400;color:#232323;letter-spacing:0.306px;">Full-time</div>
<div class="t" style="left:386.65px;top:890px;font-size:14.2px;font-weight:400;color:#f59a2e;letter-spacing:-0.077px;">Sales template</div>
<div class="t" style="left:615.75px;top:890px;font-size:14.2px;font-weight:400;color:#232323;letter-spacing:-0.138px;">San Francisco California United States</div>
<div class="t" style="left:1118.70px;top:890px;font-size:14.2px;font-weight:400;color:#232323;letter-spacing:0.6px;">Main</div>
<div class="t" style="left:1310.40px;top:890px;font-size:14.2px;font-weight:400;color:#232323;letter-spacing:0.306px;">Full-time</div>
</body>
</html>
